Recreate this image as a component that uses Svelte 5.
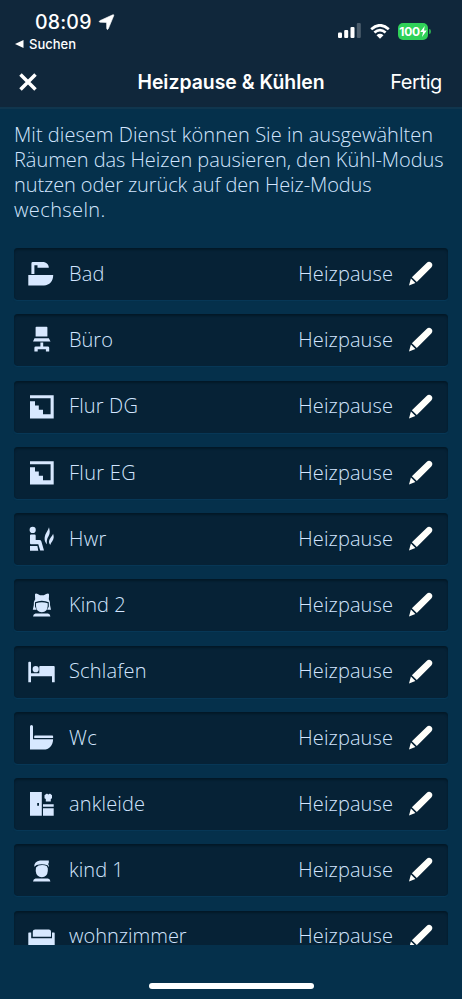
<script lang="ts">
  type Room = { name: string; icon: string; spacing: number };

  const intro: { text: string; spacing: number }[] = [
    { text: "Mit diesem Dienst können Sie in ausgewählten", spacing: 0.05 },
    { text: "Räumen das Heizen pausieren, den Kühl-Modus", spacing: -0.04 },
    { text: "nutzen oder zurück auf den Heiz-Modus", spacing: -0.1 },
    { text: "wechseln.", spacing: 0.4 },
  ];

  const rooms: Room[] = [
    { name: "Bad", icon: "bath", spacing: 0.2 },
    { name: "Büro", icon: "office", spacing: 0 },
    { name: "Flur DG", icon: "stairs", spacing: 0.15 },
    { name: "Flur EG", icon: "stairs", spacing: 0.3 },
    { name: "Hwr", icon: "sauna", spacing: 0.3 },
    { name: "Kind 2", icon: "girl", spacing: 0.05 },
    { name: "Schlafen", icon: "bed", spacing: 0.2 },
    { name: "Wc", icon: "toilet", spacing: 0.3 },
    { name: "ankleide", icon: "wardrobe", spacing: 0.15 },
    { name: "kind 1", icon: "boy", spacing: 0.05 },
    { name: "wohnzimmer", icon: "sofa", spacing: 0 },
  ];

  // 28x28 grid, filled with even-odd rule
  const icons: Record<string, string> = {
    bath: "M4.4 14V3.4Q4.4 2 5.8 2H15.5C19.5 2 21.8 4.5 21.8 7.8H10.5V5.2H7.4V14ZM1.3 15H26.2C26.2 21 22.5 25.4 17 25.4H1.3Z",
    office:
      "M9.4 .8H19.6Q20.4.8 20.4 1.6V10.6H8.6V1.6Q8.6.8 9.4.8ZM7.5 12.3H21.8L23.5 15.4H6ZM13.4 16.5H16.2V20.4H20.8Q22.2 20.4 22.2 21.8V25.4H18.9V23.3H10.7V25.4H7.4V21.8Q7.4 20.4 8.8 20.4H13.4Z",
    stairs: "M3 2.2H26.7V25.6H3V8.2H8V12.5H11.8V16.8H16V21.2H23.6V5.3H3Z",
    sauna:
      "M5.7 1.8A3.1 3.1 0 1 1 5.7 8A3.1 3.1 0 1 1 5.7 1.8ZM4 9.6H7.6Q8.7 9.6 8.7 10.7V15H12.4Q13.9 15 14.4 16.4L17 25.6H13.2L11.3 19.2H4Q3 19.2 3 18.2V10.6Q3 9.6 4 9.6ZM3 21H10.4L11.3 25.7H3ZM22 2.2C22.8 5.7 23.4 8 21.5 11.2C20 13.7 19.4 15.8 20 19.2C17.5 17.2 17 13.3 18.4 9.6C19.5 6.8 21.2 5 22 2.2ZM26.1 8.8C27.2 12 26.8 14.1 25.3 16.2C24.1 17.8 23.7 18.6 23.3 20C21.3 18 21.7 15.6 23.4 13.1C24.7 11.3 25.6 10.4 26.1 8.8Z",
    girl: "M8.8 2.5Q10.2 2.3 13 4.2H16.8Q19.8 2.3 21.2 2.5Q22.4 2.8 22 5.2L21.8 8.2Q23.4 10.6 23 14L24 18.8H20.2L21.8 15.5V11.3Q18.5 9.8 14.8 9.8Q11 9.8 8 11.3V15.5L9.5 18.8H5.8L6.8 14Q6.4 10.6 8.2 8.2L8 5.2Q7.6 2.8 8.8 2.5ZM9 12.3Q14.8 10.4 20.7 12.3V15Q20.5 20.8 14.8 21.2Q9.2 20.8 9 15ZM8.5 22.4H21Q23.3 22.8 23.4 25.6H6Q6.3 22.8 8.5 22.4Z",
    bed: "M1.3 4.7Q1.3 3.8 2.2 3.8H3.1Q4 3.8 4 4.7V15.3H12.3V8.8Q12.3 8 13.1 8H26.8Q27.7 8 27.7 8.9V24.2H25V18.3H4V24.2H1.3ZM8.7 8.1A3.1 3.1 0 1 1 8.7 14.3A3.1 3.1 0 1 1 8.7 8.1Z",
    toilet:
      "M4.5 1Q6 1 6 2.5V15.2H26.1C26 21.6 22.2 25.6 16.5 25.6H3V2.5Q3 1 4.5 1ZM8 11.5H25.3Q26.1 11.5 26.1 12.3V14.1H7.2V12.3Q7.2 11.5 8 11.5Z",
    wardrobe:
      "M3 2H14.8V25.7H3ZM10.2 13V15.7H12V13ZM16 14.2H26.7V16.8H16ZM16 18.2H26.7V25.7H16ZM17.5 5.2L19.5 3.8H20.4Q21.4 5 22.4 3.8H23.2L25 5.2V8.2L23.8 9V11.4H18.8V9L17.5 8.2Z",
    boy: "M7.2 10.8Q7.2 5 13 4.4H21.8V7.2L21 7.7Q22 8.8 22 11.2L20.5 9.3Q15 7.3 9.7 9.1ZM9 11.4L11.5 9.6Q16 8.3 19.7 10.1L20.8 12.3V15Q20.4 20.9 14.8 21.2Q9.3 20.9 8.7 15ZM8.5 22.4H21Q23.3 22.8 23.4 25.5H6Q6.3 22.8 8.5 22.4Z",
    sofa: "M8.2 6.4H21.8Q24 6.4 24 8.6V13.8H5.8V8.6Q5.8 6.4 8.2 6.4ZM1.9 9.6H4.2V15.2H25V9.6H27.1Q27.7 9.6 27.7 10.2V23H1.3V10.2Q1.3 9.6 1.9 9.6Z",
  };
</script>

<div class="screen">
  <header>
    <div class="status">
      <div class="clock">
        <span class="time">08:09</span>
        <svg class="location" width="17" height="17" viewBox="0 0 17 17">
          <path d="M14.8.8Q16.3.3 15.7 1.8L10.3 14.8Q9.3 16.6 8.7 14.5L8.6 8.9Q8.5 8.4 8 8.4L2 8.2Q.2 7.6 1.8 6.7Z" />
        </svg>
      </div>
      <div class="indicators">
        <svg width="24" height="16" viewBox="0 0 24 16">
          <rect x="0" y="9.4" width="4" height="5.6" rx="1.1" />
          <rect x="6.2" y="7" width="4" height="8" rx="1.1" />
          <rect x="12.5" y="4" width="4" height="11" rx="1.1" />
          <rect class="dim" x="18.8" y="0" width="4" height="15" rx="1.1" />
        </svg>
        <svg class="wifi" width="20" height="15" viewBox="0 0 20 15">
          <path class="arc" d="M1.2 5.2Q10-2.6 18.8 5.2" />
          <path class="arc" d="M4.4 8.6Q10 3.7 15.6 8.6" />
          <path d="M6.5 11.2Q10 8.4 13.5 11.2L10 14.8Z" />
        </svg>
        <div class="battery">
          <span>100</span>
          <svg width="7" height="11" viewBox="0 0 7 11">
            <path d="M4.7 0L.2 6H3L2 11L6.8 4.6H4Z" />
          </svg>
        </div>
        <div class="nub"></div>
      </div>
    </div>
    <div class="back">
      <svg width="9" height="8" viewBox="0 0 9 8"><path d="M8.5 0V8L0 4Z" /></svg>
      <span>Suchen</span>
    </div>
    <nav>
      <button class="close" aria-label="Schließen">
        <svg width="18" height="18" viewBox="0 0 18 18">
          <path d="M1.5 1.5L16.5 16.5M16.5 1.5L1.5 16.5" />
        </svg>
      </button>
      <h1>Heizpause &amp; Kühlen</h1>
      <button class="done">Fertig</button>
    </nav>
  </header>

  <main>
    <p>
      {#each intro as line}
        <span style="letter-spacing: {line.spacing}px">{line.text}</span>
      {/each}
    </p>
    <ul>
      {#each rooms as room}
        <li>
          <svg class="icon" width="28" height="28" viewBox="0 0 28 28">
            <path fill-rule="evenodd" d={icons[room.icon]} />
          </svg>
          <span class="name" style="letter-spacing: {room.spacing}px">{room.name}</span>
          <span class="mode">Heizpause</span>
          <svg class="pencil" width="28" height="28" viewBox="0 0 28 28">
            <path d="M19.6 2.9Q22 .9 24.3 2.8Q26.4 5 24.3 7.4L9.8 21.9L4.9 17.2ZM3.9 18.4L8.4 22.9L2 25.4Z" />
          </svg>
        </li>
      {/each}
    </ul>
  </main>

  <footer><div class="home"></div></footer>
</div>

<style>
  :global(body) {
    margin: 0;
    background: #05304b;
  }

  .screen {
    display: flex;
    flex-direction: column;
    width: 462px;
    height: 999px;
    overflow: hidden;
    background: #05304b;
    color: #fff;
    font-family: Inter, "Liberation Sans", sans-serif;
  }

  svg {
    display: block;
    flex: none;
    fill: currentColor;
  }

  header {
    box-sizing: border-box;
    flex: none;
    height: 109px;
    padding-top: 9px;
    background: #10273b;
    border-bottom: 2px solid #10364e;
  }

  .status {
    display: flex;
    justify-content: space-between;
    height: 26px;
    padding: 0 31px 0 35px;
  }

  .clock {
    display: flex;
    align-items: center;
    gap: 6px;
  }

  .time {
    font-size: 19.5px;
    font-weight: 500;
    line-height: 26px;
    letter-spacing: 0.2px;
  }

  .location {
    stroke: #fff;
    stroke-width: 0.6;
  }

  .indicators {
    display: flex;
    align-items: center;
    padding-top: 17px;
    height: 10px;
  }

  .dim {
    opacity: 0.25;
  }

  .wifi {
    margin-left: 8px;
  }

  .arc {
    fill: none;
    stroke: #fff;
    stroke-width: 2.7;
  }

  .battery {
    display: flex;
    align-items: center;
    justify-content: center;
    width: 30px;
    height: 17px;
    margin-left: 8px;
    background: #30d158;
    border-radius: 5px;
    font-size: 12px;
    font-weight: 700;
    letter-spacing: -0.3px;
  }

  .nub {
    width: 2px;
    height: 5px;
    margin-left: 1px;
    background: #2aa54f;
    border-radius: 0 2px 2px 0;
  }

  .back {
    display: flex;
    align-items: center;
    gap: 5px;
    height: 18px;
    padding-left: 15px;
    font-size: 13px;
    font-weight: 500;
  }

  nav {
    display: grid;
    grid-template-columns: 90px 1fr 90px;
    align-items: center;
    height: 58px;
  }

  button {
    padding: 0;
    border: 0;
    background: none;
    color: inherit;
    font: inherit;
  }

  .close {
    justify-self: start;
    margin-left: 19px;
  }

  .close path {
    stroke: #fff;
    stroke-width: 3.5;
  }

  h1 {
    margin: 0;
    font-size: 19.4px;
    font-weight: 600;
    text-align: center;
    white-space: nowrap;
  }

  .done {
    justify-self: end;
    margin-right: 20px;
    font-size: 20px;
    letter-spacing: -0.4px;
  }

  main {
    flex: none;
    height: 836px;
    overflow: hidden;
    color: #d3e6ff;
    font-family: "Open Sans", "Noto Sans", sans-serif;
    font-size: 20px;
    font-weight: 300;
  }

  p {
    height: 126px;
    margin: 0;
    padding: 13px 0 0 14px;
    line-height: 25.1px;
  }

  p span {
    display: block;
    white-space: nowrap;
  }

  ul {
    display: flex;
    flex-direction: column;
    gap: 14.25px;
    margin: 0;
    padding: 0 14px;
    list-style: none;
  }

  li {
    display: flex;
    align-items: center;
    box-sizing: border-box;
    height: 52px;
    padding: 0 13px;
    background: #062236;
    border-radius: 4px;
    box-shadow:
      inset 0 2px 2px #031928,
      0 1px 1px #083958;
  }

  .icon {
    fill: #d7e8ff;
  }

  .name,
  .mode {
    padding-bottom: 1.5px;
  }

  .name {
    margin-left: 14px;
  }

  .mode {
    margin-left: auto;
    letter-spacing: 0.1px;
  }

  .pencil {
    margin-left: 14px;
    fill: #fffffb;
  }

  footer {
    display: flex;
    justify-content: center;
    padding-top: 38px;
  }

  .home {
    width: 165px;
    height: 6px;
    border-radius: 3px;
    background: #fff;
  }
</style>
